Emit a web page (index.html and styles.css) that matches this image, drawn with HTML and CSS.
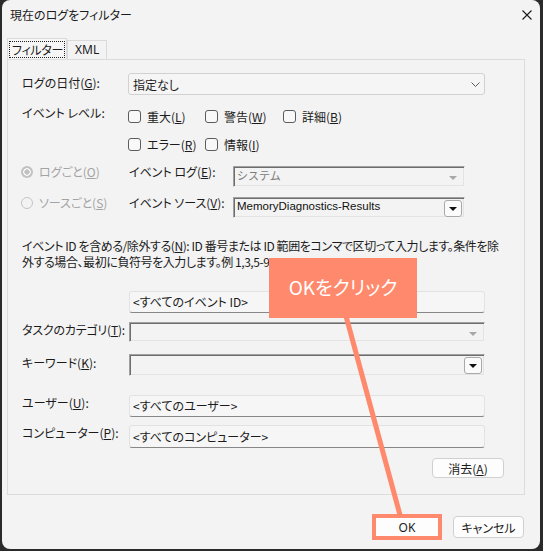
FILE: index.html
```html
<!DOCTYPE html>
<html lang="ja">
<head>
<meta charset="utf-8">
<title>現在のログをフィルター</title>
<link rel="stylesheet" href="styles.css">
</head>
<body>
<div class="window">
  <div class="titlebar">
    <span class="title">現在のログをフィルター</span>
    <svg class="close" width="10" height="10" viewBox="0 0 10 10"><path d="M0.5 0.5L9.5 9.5M9.5 0.5L0.5 9.5" stroke="#1a1a1a" stroke-width="1.1" fill="none"/></svg>
  </div>
  <div class="tabs">
    <div class="tab active"><span class="focus">フィルター</span></div>
    <div class="tab">XML</div>
  </div>
  <div class="panel">
    <div class="row r-date">
      <span class="lbl w106">ログの日付(<u>G</u>):</span>
      <div class="wcombo">
        <span>指定なし</span>
        <svg class="chev" width="9" height="5" viewBox="0 0 9 5"><path d="M0.5 0.5L4.5 4.5L8.5 0.5" stroke="#5a5a5a" stroke-width="1" fill="none"/></svg>
      </div>
    </div>
    <div class="row r-lv1">
      <span class="lbl w106 up">イベント レベル:</span>
      <span class="chk w77"><span class="box"></span>重大(<u>L</u>)</span>
      <span class="chk w78"><span class="box"></span>警告(<u>W</u>)</span>
      <span class="chk"><span class="box"></span>詳細(<u>B</u>)</span>
    </div>
    <div class="row r-lv2">
      <span class="spacer w106"></span>
      <span class="chk w77"><span class="box"></span>エラー(<u>R</u>)</span>
      <span class="chk"><span class="box"></span>情報(<u>I</u>)</span>
    </div>
    <div class="row r-log">
      <span class="radio w107 dis"><span class="dot on"></span>ログごと(<u>O</u>)</span>
      <span class="lbl w104 up">イベント ログ(<u>E</u>):</span>
      <div class="ocombo w232 disabled">
        <span class="otext gray">システム</span>
        <span class="tri gray"></span>
      </div>
    </div>
    <div class="row r-src">
      <span class="radio w107 dis"><span class="dot"></span>ソースごと(<u>S</u>)</span>
      <span class="lbl w104 up">イベント ソース(<u>V</u>):</span>
      <div class="ocombo w232">
        <span class="otext">MemoryDiagnostics-Results</span>
        <span class="dbtn"><span class="tri"></span></span>
      </div>
    </div>
    <div class="desc">
      <div class="dline">イベント ID を含める/除外する(<u>N</u>): ID 番号または ID 範囲をコンマで区切って入力します。条件を除</div>
      <div class="dline">外する場合、最初に負符号を入力します。例 1,3,5-99,-76</div>
    </div>
    <div class="row r-id">
      <span class="spacer w107"></span>
      <div class="wtext"><span>&lt;すべてのイベント ID&gt;</span></div>
    </div>
    <div class="row r-task">
      <span class="lbl w107 up">タスクのカテゴリ(<u>T</u>):</span>
      <div class="ocombo w356 h20 disabled">
        <span class="otext"></span>
        <span class="tri gray"></span>
      </div>
    </div>
    <div class="row r-key">
      <span class="lbl w107 up">キーワード(<u>K</u>):</span>
      <div class="ocombo w356 h22">
        <span class="otext"></span>
        <span class="dbtn"><span class="tri"></span></span>
      </div>
    </div>
    <div class="row r-user">
      <span class="lbl w107 up">ユーザー(<u>U</u>):</span>
      <div class="wtext"><span>&lt;すべてのユーザー&gt;</span></div>
    </div>
    <div class="row r-comp">
      <span class="lbl w107 up">コンピューター(<u>P</u>):</span>
      <div class="wtext h23"><span>&lt;すべてのコンピューター&gt;</span></div>
    </div>
    <div class="row r-clear">
      <span class="btn clear">消去(<u>A</u>)</span>
    </div>
  </div>
  <div class="footer">
    <span class="btn ok">OK</span>
    <span class="btn cancel">キャンセル</span>
  </div>

  <svg class="pointer" width="538" height="549" viewBox="0 0 538 549"><line x1="344" y1="316" x2="398" y2="515" stroke="#ff896c" stroke-width="5"/></svg>
  <div class="callout">OKをクリック</div>
</div>
</body>
</html>
```
FILE: styles.css
```css
* { box-sizing: border-box; }
html, body { margin: 0; padding: 0; }
body {
  width: 543px;
  height: 551px;
  overflow: hidden;
  background: #2a2a2a;
  font-family: "Noto Sans CJK JP", "Noto Sans", sans-serif;
  font-size: 12px;
  color: #1b1b1b;
  font-feature-settings: "palt";
}
u { text-decoration: underline; text-underline-offset: 1px; }

.window {
  position: relative;
  margin-left: 2px;
  width: 538px;
  height: 549px;
  background: #f3f3f3;
  border-radius: 8px;
  overflow: hidden;
}
.titlebar {
  height: 30px;
  display: flex;
  align-items: center;
  justify-content: space-between;
  padding: 0 8px;
}
.title { font-size: 12px; line-height: 16px; }

.tabs {
  display: flex;
  align-items: flex-end;
  height: 21px;
  margin: 8px 0 0 5px;
}
.tab {
  height: 19px;
  padding: 0 7px;
  border: 1px solid #dadada;
  border-bottom: none;
  line-height: 18px;
  font-size: 12px;
  font-family: "Noto Sans", sans-serif;
  background: #f3f3f3;
  white-space: nowrap;
}
.tab.active {
  height: 21px;
  padding: 2px 1px 0 1px;
  background: #f6f6f6;
  font-family: "Noto Sans CJK JP", sans-serif;
}
.tab.active .focus {
  display: block;
  height: 17px;
  line-height: 15px;
  border: 1px dotted #222;
  padding: 0 1px 0 2px;
  letter-spacing: -0.3px;
  white-space: nowrap;
}

.panel {
  margin-left: 5px;
  width: 518px;
  height: 436px;
  border: 1px solid #dcdcdc;
  padding-left: 14px;
}
.row { display: flex; align-items: center; }
.w106 { width: 106px; flex: none; }
.w107 { width: 107px; flex: none; }
.w104 { width: 104px; flex: none; }
.w77 { width: 77px; flex: none; }
.w78 { width: 78px; flex: none; }
.lbl { white-space: nowrap; line-height: 14px; }
.lbl.up { align-self: flex-start; }

.r-date { margin-top: 13px; height: 22px; }
.r-date .lbl { margin-top: -2px; }
.r-lv1 { margin-top: 11px; height: 21px; }
.r-lv2 { margin-top: 7px; height: 21px; }
.r-log { margin-top: 11px; height: 21px; align-items: flex-start; }
.r-src { margin-top: 10px; height: 21px; align-items: flex-start; }
.r-id { margin-top: 21px; height: 22px; }
.r-task { margin-top: 9px; height: 20px; align-items: flex-start; }
.r-key { margin-top: 12px; height: 22px; align-items: flex-start; }
.r-user { margin-top: 19px; height: 22px; align-items: flex-start; }
.r-comp { margin-top: 8px; height: 23px; align-items: flex-start; }
.r-clear { margin-top: 10px; height: 20px; justify-content: flex-end; padding-right: 20px; }

.r-log .lbl, .r-src .lbl { margin-top: -1px; }
.r-task .lbl { margin-top: 1px; letter-spacing: -0.2px; }
.r-key .lbl { margin-top: 2px; }
.r-user .lbl, .r-comp .lbl { margin-top: 1px; }

.wcombo {
  width: 357px;
  height: 22px;
  border: 1px solid #d1d1d1;
  border-radius: 3px;
  background: #f5f5f5;
  display: flex;
  align-items: center;
  justify-content: space-between;
  padding: 0 4px 0 4px;
  font-size: 12px;
}

.chk {
  display: flex;
  align-items: center;
  white-space: nowrap;
  line-height: 14px;
}
.box {
  width: 13px;
  height: 13px;
  border: 1px solid #5c5c5c;
  border-radius: 3px;
  background: #f8f8f8;
  margin-right: 6px;
  flex: none;
}

.radio {
  display: flex;
  align-items: center;
  margin-left: -1px;
  margin-right: 1px;
  line-height: 12px;
  white-space: nowrap;
}
.radio.dis { color: #a3a3a3; }
.dot {
  width: 12px;
  height: 12px;
  border-radius: 50%;
  border: 1px solid #c4c4c4;
  margin-right: 6px;
  flex: none;
}
.dot.on {
  border: none;
  background: radial-gradient(circle, #c2c2c2 0 2.4px, #f6f6f6 2.9px 3.6px, #c2c2c2 4.1px);
}

.ocombo {
  height: 21px;
  display: flex;
  justify-content: space-between;
  align-items: flex-start;
  border: 1px solid;
  border-color: #a0a0a0 #f4f4f4 #f4f4f4 #a0a0a0;
  box-shadow: inset 1px 1px 0 #6d6d6d, inset -1px -1px 0 #e3e3e3;
  background: #f3f3f3;
  padding: 1px 2px 0 2px;
}
.w232 { width: 232px; }
.w356 { width: 356px; }
.h20 { height: 20px; }
.h22 { height: 22px; }
.otext {
  font-family: "Liberation Sans", "Noto Sans CJK JP", sans-serif;
  font-size: 11.5px;
  line-height: 15px;
  color: #111;
  font-feature-settings: normal;
  padding-left: 1px;
}
.otext.gray { color: #7a7a7a; font-family: "Noto Sans CJK JP", sans-serif; font-size: 11px; }
.tri {
  width: 0;
  height: 0;
  border-left: 4px solid transparent;
  border-right: 4px solid transparent;
  border-top: 4px solid #111;
}
.tri.gray { border-top-color: #a8a8a8; margin: 8px 5px 0 0; }
.dbtn {
  width: 18px;
  height: 17px;
  margin-top: 1px;
  border: 1px solid #a9a9a9;
  border-radius: 3px;
  background: #fbfbfb;
  display: flex;
  align-items: center;
  justify-content: center;
}

.wtext {
  width: 356px;
  height: 22px;
  border: 1px solid #e2e2e2;
  border-bottom: 1px solid #878787;
  border-radius: 3px;
  background: #f6f6f6;
  display: flex;
  align-items: center;
  padding-left: 3px;
  padding-bottom: 1px;
}
.wtext.h23 { height: 23px; }

.desc {
  margin-top: 20px;
  height: 32px;
  white-space: nowrap;
  letter-spacing: -0.42px;
}
.dline { height: 16px; line-height: 16px; }

.btn {
  display: flex;
  align-items: center;
  justify-content: center;
  background: #fdfdfd;
  border: 1px solid #d0d0d0;
  border-radius: 4px;
  font-size: 12px;
}
.btn.clear { width: 72px; height: 20px; }
.footer {
  display: flex;
  align-items: center;
  justify-content: flex-end;
  margin-top: 19px;
  height: 26px;
  padding-right: 16px;
}
.btn.ok {
  width: 70px;
  height: 26px;
  border: 4px solid #ff896c;
  border-radius: 0;
  font-family: "Noto Sans", sans-serif;
}
.btn.cancel { width: 71px; height: 22px; margin-left: 11px; }

.pointer { position: absolute; left: 0; top: 0; pointer-events: none; }
.callout {
  position: absolute;
  left: 267px;
  top: 258px;
  width: 148px;
  height: 60px;
  background: #ff896c;
  color: #fff;
  font-size: 19px;
  display: flex;
  align-items: center;
  justify-content: center;
  padding-bottom: 3px;
}
```
